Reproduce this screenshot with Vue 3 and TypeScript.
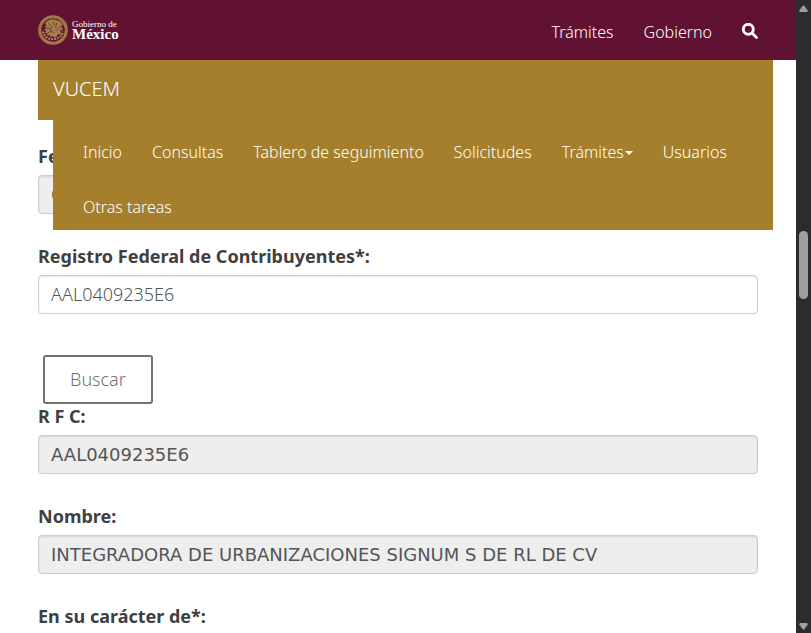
<script setup lang="ts">
import { ref } from 'vue'

interface NavItem {
  label: string
  dropdown?: boolean
}

const navItems: NavItem[] = [
  { label: 'Inicio' },
  { label: 'Consultas' },
  { label: 'Tablero de seguimiento' },
  { label: 'Solicitudes' },
  { label: 'Trámites', dropdown: true },
  { label: 'Usuarios' },
  { label: 'Otras tareas' },
]

const fecha = ref('0')
const rfcBusqueda = ref('AAL0409235E6')
const rfc = ref('AAL0409235E6')
const nombre = ref('INTEGRADORA DE URBANIZACIONES SIGNUM S DE RL DE CV')
</script>

<template>
  <div class="window">
    <div class="page">
      <header class="topbar">
        <a class="brand" href="#">
          <svg class="seal" viewBox="0 0 30 30" aria-hidden="true">
            <circle cx="15" cy="15" r="13.300" class="rim" />
            <circle cx="15" cy="15" r="13.300" class="rim-marks" />
            <path
              class="eagle"
              d="M7 8.500C9.500 4.500 15 3.200 19 5.200c3 .5 5.600 2.600 6.300 6-1.200-.6-2.100-.8-3-.5 1.500 1.200 2.500 3 2.600 5.300-1-.9-1.900-1.300-2.900-1.200.9 1.700 1 3.600.5 5.400-.8-.9-1.600-1.300-2.400-1.300-.5 1.900-1.900 3.300-3.900 3.800l-1.400-1.600-2.600 1.200-.2-2.200-3.300.6 1-2.200-3.200-.8 1.900-1.500-2.700-2.100 2.900-.4-2.200-2.600 2.500.1z"
            />
            <path class="detail" d="M10 8l4 4-2 3 4 3M15 6.500l1.500 4M19 7.500l-1.500 5M22 11.500l-4 4M8.500 13l4 .5M14 16l-5 2.500" />
            <path class="wreath" d="M5 16.500c.7 4.400 4.600 7.700 10 7.700s9.300-3.300 10-7.700" />
          </svg>
          <span class="wordmark">
            <span class="wordmark-top">Gobierno de</span>
            <span class="wordmark-main">México</span>
          </span>
        </a>
        <nav class="toplinks">
          <a href="#">Trámites</a>
          <a href="#">Gobierno</a>
          <a href="#" aria-label="Buscar" class="search">
            <svg viewBox="0 0 17 17" aria-hidden="true">
              <circle cx="6.700" cy="6.700" r="5.300" />
              <path d="M10.600 10.600l4.800 4.800" />
            </svg>
          </a>
        </nav>
      </header>

      <div class="content">
        <div class="subnav">
          <div class="subnav-head"><a href="#">VUCEM</a></div>
          <nav class="subnav-menu">
            <a v-for="item in navItems" :key="item.label" href="#">
              {{ item.label }}<i v-if="item.dropdown" class="caret"></i>
            </a>
          </nav>
        </div>

        <form @submit.prevent>
          <div class="group">
            <label for="fecha">Fecha:</label>
            <input id="fecha" v-model="fecha" type="text" disabled />
          </div>
          <div class="group">
            <label for="rfc-busqueda">Registro Federal de Contribuyentes*:</label>
            <input id="rfc-busqueda" v-model="rfcBusqueda" type="text" />
          </div>
          <button type="submit" class="submit">Buscar</button>
          <div class="group">
            <label for="rfc">R F C:</label>
            <input id="rfc" v-model="rfc" type="text" disabled />
          </div>
          <div class="group">
            <label for="nombre">Nombre:</label>
            <input id="nombre" v-model="nombre" type="text" disabled />
          </div>
          <div class="group">
            <label for="caracter">En su carácter de*:</label>
            <input id="caracter" type="text" />
          </div>
        </form>
      </div>
    </div>

    <div class="scrollbar" aria-hidden="true">
      <svg viewBox="0 0 9 8"><path d="M3.500 1Q4.500 0 5.500 1L8.700 5.500Q9 7 7.500 7h-6Q0 7 .3 5.500z" /></svg>
      <div class="track"><div class="thumb"></div></div>
      <svg viewBox="0 0 9 8"><path d="M3.500 7Q4.500 8 5.500 7L8.700 2.500Q9 1 7.500 1h-6Q0 1 .3 2.500z" /></svg>
    </div>
  </div>
</template>

<style>
body {
  overflow: hidden;
  background: #fff;
}
</style>

<style scoped>
* {
  box-sizing: border-box;
}

.window {
  display: flex;
  height: 100vh;
  overflow: hidden;
  font-family: 'Noto Sans', sans-serif;
  color: #404041;
}

.page {
  flex: 1;
  min-width: 0;
  overflow: hidden;
}

a {
  color: #fff;
  text-decoration: none;
}

.topbar {
  display: flex;
  align-items: center;
  justify-content: space-between;
  height: 60px;
  padding: 0 38px;
  background: #611232;
}

.brand {
  display: flex;
  align-items: center;
  gap: 4px;
}

.seal {
  width: 30px;
  height: 30px;
  fill: none;
}

.rim {
  stroke: #a57f4b;
  stroke-width: 3;
}

.rim-marks {
  stroke: #7d4a3d;
  stroke-width: 1;
  stroke-dasharray: 1 2;
}

.eagle {
  fill: #a57f4b;
}

.detail {
  stroke: #7d3f3a;
  stroke-width: 1;
}

.wreath {
  stroke: #b08a50;
  stroke-width: 2;
  stroke-dasharray: 2 1;
}

.wordmark {
  display: flex;
  flex-direction: column;
  font-family: 'Liberation Serif', serif;
  font-weight: 700;
}

.wordmark-top {
  font-size: 9px;
  font-weight: 400;
  line-height: 8px;
}

.wordmark-main {
  font-size: 15px;
  line-height: 12px;
}

.toplinks {
  display: flex;
  align-items: center;
  gap: 30px;
  padding-top: 4px;
  font-size: 16px;
  font-weight: 300;
  line-height: 24px;
}

.search {
  padding-bottom: 3px;
}

.search svg {
  display: block;
  width: 16px;
  height: 16px;
  fill: none;
  stroke: #fff;
  stroke-width: 3;
  stroke-linecap: round;
}

.content {
  position: relative;
  padding: 84px 38px 0;
}

.subnav {
  position: absolute;
  top: 0;
  left: 38px;
  right: 23px;
  z-index: 1;
  font-weight: 300;
}

.subnav-head {
  height: 60px;
  padding: 0 15px;
  background: #a57f2c;
  font-size: 20px;
  line-height: 58px;
}

.subnav-menu {
  display: flex;
  flex-wrap: wrap;
  margin-left: 15px;
  padding: 0 15px;
  background: #a57f2c;
  font-size: 16px;
  line-height: 24px;
}

.subnav-menu a {
  display: flex;
  align-items: center;
  padding: 20px 15px 11px;
}

.caret {
  margin-top: 2px;
  margin-left: 1px;
  border-top: 4px solid #fff;
  border-right: 4px solid transparent;
  border-left: 4px solid transparent;
}

.group {
  margin-bottom: 30px;
}

label {
  display: block;
  margin-bottom: 7px;
  font-size: 18px;
  font-weight: 700;
  line-height: 24px;
}

input {
  display: block;
  width: 100%;
  height: 39px;
  padding: 0 12px 2px;
  border: 1px solid #ccc;
  border-radius: 4px;
  background: #fff;
  box-shadow: inset 0 1px 2px rgba(0, 0, 0, 0.1);
  color: #555;
  font-family: 'Noto Sans', sans-serif;
  font-size: 18px;
  font-weight: 300;
}

input:disabled {
  padding-bottom: 0;
  background: #eee;
  font-family: 'DejaVu Sans', sans-serif;
  font-weight: 400;
}

.submit {
  display: block;
  height: 49px;
  margin: 41px 0 0 5px;
  padding: 0 25px 2px;
  border: 2px solid #6f7271;
  border-radius: 3px;
  background: #fff;
  color: #6f7271;
  font-family: 'Noto Sans', sans-serif;
  font-size: 18px;
  font-weight: 300;
}

.scrollbar {
  display: flex;
  flex-direction: column;
  align-items: center;
  width: 15px;
  padding: 5px 0 3px;
  background: #2c2c2c;
}

.scrollbar svg {
  width: 9px;
  height: 8px;
  fill: #9f9f9f;
}

.track {
  flex: 1;
  width: 9px;
  padding-top: 218px;
}

.thumb {
  height: 68px;
  border-radius: 5px;
  background: #9f9f9f;
}
</style>
